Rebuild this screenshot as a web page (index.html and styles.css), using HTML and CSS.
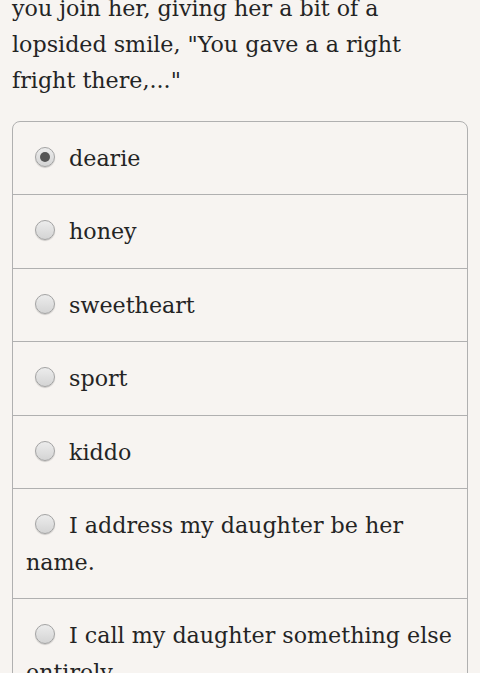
FILE: index.html
```html
<!DOCTYPE html>
<html>
<head>
<meta charset="utf-8">
<link rel="stylesheet" href="styles.css">
</head>
<body>
<p class="story">you join her, giving her a bit of a lopsided smile, "You gave a a right fright there,..."</p>
<form class="choices">
  <label class="choice"><input type="radio" name="c" checked> dearie</label>
  <label class="choice"><input type="radio" name="c"> honey</label>
  <label class="choice"><input type="radio" name="c"> sweetheart</label>
  <label class="choice"><input type="radio" name="c"> sport</label>
  <label class="choice"><input type="radio" name="c"> kiddo</label>
  <label class="choice"><input type="radio" name="c"> I address my daughter be her name.</label>
  <label class="choice"><input type="radio" name="c"> I call my daughter something else entirely.</label>
</form>
</body>
</html>
```
FILE: styles.css
```css
html, body {
  margin: 0;
  padding: 0;
  background: #f7f4f1;
}
body {
  font-family: "DejaVu Serif", "Liberation Serif", serif;
  font-size: 22.2px;
  line-height: 36px;
  color: #242424;
  overflow: hidden;
  height: 673px;
}
.story {
  margin: -10px 12px 0 12px;
}
.choices {
  margin: 22.5px 12px 0 12px;
  border: 1px solid #b0b0b0;
  border-radius: 8px 8px 0 0;
}
.choice {
  display: block;
  padding: 18px 8px 18px 13px;
  line-height: 36.5px;
  border-top: 1px solid #b0b0b0;
}
.choice:first-child {
  border-top: none;
}
.choice input {
  appearance: none;
  -webkit-appearance: none;
  width: 20px;
  height: 20px;
  margin: 0 7px 0 9px;
  vertical-align: -1px;
  border-radius: 50%;
  border: 1px solid #a3a3a3;
  background: linear-gradient(#ececec, #d4d4d4);
  box-shadow: 0 1px 1px rgba(0,0,0,0.18);
  position: relative;
}
.choice input:checked::after {
  content: "";
  position: absolute;
  left: 4px;
  top: 4px;
  width: 10px;
  height: 10px;
  border-radius: 50%;
  background: #555;
}
```
